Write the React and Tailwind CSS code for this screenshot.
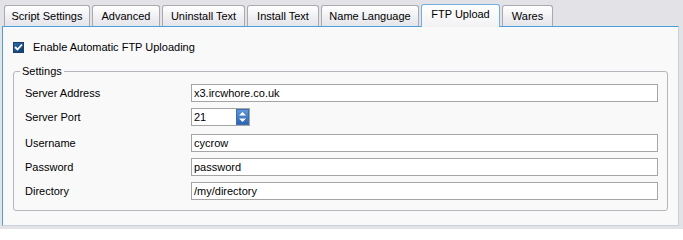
import { useState } from 'react';

const tabs = ['Script Settings', 'Advanced', 'Uninstall Text', 'Install Text', 'Name Language', 'FTP Upload', 'Wares'];

const tabWidths = {
  'Script Settings': 'w-[86px]',
  'Advanced': 'w-[68px]',
  'Uninstall Text': 'w-[83px]',
  'Install Text': 'w-[72px]',
  'Name Language': 'w-[98px]',
  'FTP Upload': 'w-[79px]',
  'Wares': 'w-[51px]',
};

function Field({ label, value, onChange, className = '' }) {
  return (
    <div className={`flex items-center h-[18px] ${className}`}>
      <span className="w-[177px] pl-[11px] text-[11px] text-black">{label}</span>
      <input
        value={value}
        onChange={(e) => onChange(e.target.value)}
        className="w-[467px] h-[18px] border border-[#a5a5a5] bg-white px-[2px] text-[11px] text-black outline-none"
      />
    </div>
  );
}

export default function App() {
  const [active, setActive] = useState('FTP Upload');
  const [enabled, setEnabled] = useState(true);
  const [form, setForm] = useState({
    address: 'x3.ircwhore.co.uk',
    port: '21',
    username: 'cycrow',
    password: 'password',
    directory: '/my/directory',
  });

  const set = (key) => (v) => setForm({ ...form, [key]: v });

  return (
    <div className="w-[683px] h-[229px] bg-[#e3e2e6] pt-[4px] pl-[2px] select-none" style={{ fontFamily: '"Liberation Sans", Arial, sans-serif' }}>
      {/* tab strip */}
      <div className="flex items-end h-[22px] pl-[2px] relative z-10">
        {tabs.map((t) => {
          const sel = t === active;
          return (
            <button
              key={t}
              onClick={() => setActive(t)}
              className={`${tabWidths[t]} mr-[2px] text-[11px] text-black rounded-t-[3px] border border-b-0 ${
                sel
                  ? 'h-[23px] -mb-[1px] border-[#6fb0e3] bg-gradient-to-b from-white to-[#f2f2f4] pb-[3px]'
                  : 'h-[21px] border-[#a9aab0] bg-gradient-to-b from-white to-[#e4e4ea]'
              }`}
            >
              {t}
            </button>
          );
        })}
      </div>

      {/* panel */}
      <div className="w-[677px] h-[200px] border border-[#4c9fdb] border-r-[#c9d3dd] border-b-[#c9d3dd] bg-[#f9f9fa] pl-[10px] pt-[14px]">
        <label className="flex items-center gap-[9px] h-[12px]">
          <span
            onClick={() => setEnabled(!enabled)}
            className="w-[11px] h-[11px] border border-[#1c3f6a] bg-gradient-to-br from-[#2a6aaa] to-[#123c6c] flex items-center justify-center"
          >
            {enabled && (
              <svg width="9" height="8" viewBox="0 0 9 8">
                <path d="M1 4 L3.5 6.5 L8 1.5" stroke="white" strokeWidth="1.8" fill="none" />
              </svg>
            )}
          </span>
          <span className="text-[11px] text-black">Enable Automatic FTP Uploading</span>
        </label>

        <fieldset className="mt-[12px] w-[655px] h-[146px] border border-[#b7b4bd] rounded-[3px] pt-[3px] pl-0">
          <legend className="ml-[6px] px-[2px] text-[11px] text-black leading-[12px]">Settings</legend>
          <div className="flex flex-col gap-[6px] pt-[4px]">
            <Field label="Server Address" value={form.address} onChange={set('address')} />
            <div className="flex items-center h-[18px]">
              <span className="w-[177px] pl-[11px] text-[11px] text-black">Server Port</span>
              <div className="w-[59px] h-[18px] border border-[#a5a5a5] bg-white flex">
                <input
                  value={form.port}
                  onChange={(e) => set('port')(e.target.value)}
                  className="flex-1 w-0 px-[2px] text-[11px] text-black outline-none"
                />
                <div className="w-[13px] h-[16px] flex flex-col bg-gradient-to-b from-[#5f97d8] to-[#2e64b0] border border-[#3a6fb8]">
                  <svg width="11" height="7" viewBox="0 0 11 7" className="block">
                    <path d="M2 5.5 L5.5 2 L9 5.5 Z" fill="white" />
                  </svg>
                  <svg width="11" height="7" viewBox="0 0 11 7" className="block">
                    <path d="M2 1.5 L5.5 5 L9 1.5 Z" fill="white" />
                  </svg>
                </div>
              </div>
            </div>
            <Field label="Username" value={form.username} onChange={set('username')} className="mt-[2px]" />
            <Field label="Password" value={form.password} onChange={set('password')} />
            <Field label="Directory" value={form.directory} onChange={set('directory')} />
          </div>
        </fieldset>
      </div>
    </div>
  );
}
